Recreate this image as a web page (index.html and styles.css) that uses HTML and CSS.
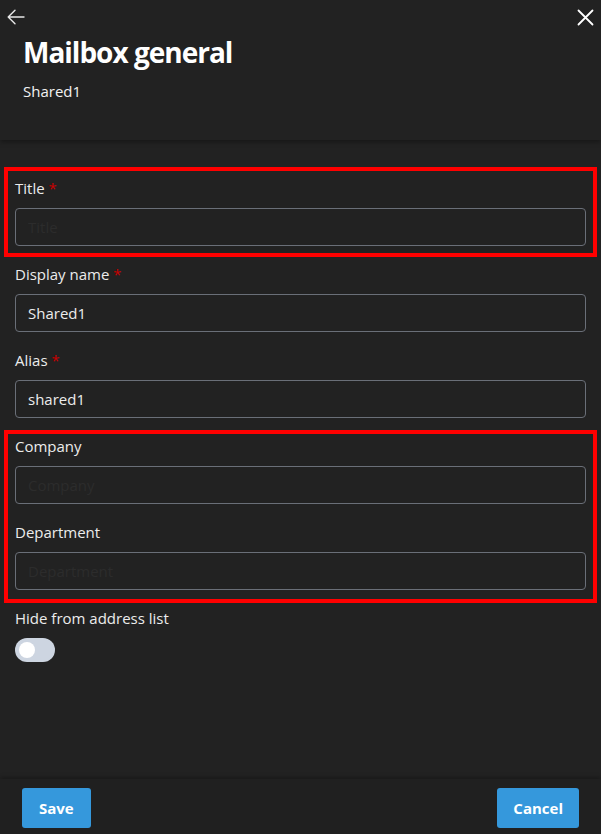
FILE: index.html
```html
<!DOCTYPE html>
<html lang="en">
<head>
<meta charset="utf-8">
<title>Mailbox general</title>
<link rel="stylesheet" href="styles.css">
</head>
<body>
<div class="panel">
  <header class="head">
    <div class="topbar">
      <button class="icon-btn" aria-label="Back">
        <svg width="18" height="16" viewBox="0 0 18 16" fill="none" stroke="#e6e6e6" stroke-width="1.4" stroke-linecap="round" stroke-linejoin="round"><path d="M17 8H1.5M8 1.2L1.2 8L8 14.8"/></svg>
      </button>
      <button class="icon-btn" aria-label="Close">
        <svg width="17" height="17" viewBox="0 0 17 17" fill="none" stroke="#ffffff" stroke-width="1.8" stroke-linecap="round"><path d="M1.5 1.5L15.5 15.5M15.5 1.5L1.5 15.5"/></svg>
      </button>
    </div>
    <h1 class="title">Mailbox general</h1>
    <p class="subtitle">Shared1</p>
  </header>

  <main class="form">
    <div class="group group-one">
      <div class="field">
        <label class="label">Title <span class="req">*</span></label>
        <input class="input" type="text" placeholder="Title">
      </div>
    </div>

    <div class="field">
      <label class="label">Display name <span class="req">*</span></label>
      <input class="input" type="text" value="Shared1">
    </div>

    <div class="field">
      <label class="label">Alias <span class="req">*</span></label>
      <input class="input" type="text" value="shared1">
    </div>

    <div class="group group-two">
      <div class="field">
        <label class="label">Company</label>
        <input class="input" type="text" placeholder="Company">
      </div>
      <div class="field">
        <label class="label">Department</label>
        <input class="input" type="text" placeholder="Department">
      </div>
    </div>

    <div class="field">
      <label class="label">Hide from address list</label>
      <span class="toggle"><span class="knob"></span></span>
    </div>
  </main>

  <footer class="foot">
    <button class="btn">Save</button>
    <button class="btn btn-cancel">Cancel</button>
  </footer>
</div>
</body>
</html>
```

FILE: styles.css
```css
* { box-sizing: border-box; }

html, body {
  margin: 0;
  padding: 0;
  background: #222222;
}

body {
  font-family: "Open Sans", "Noto Sans", "Liberation Sans", sans-serif;
  color: #ececec;
}

.panel {
  width: 601px;
  height: 834px;
  display: flex;
  flex-direction: column;
  background: #222222;
  overflow: hidden;
}

.head {
  position: relative;
  z-index: 2;
  padding: 0 23px 39px;
  background: #222222;
  box-shadow: 0 2px 5px rgba(0, 0, 0, 0.35);
}

.topbar {
  height: 34px;
  margin: 0 -16px;
  padding-top: 9px;
  display: flex;
  justify-content: space-between;
  align-items: flex-start;
}

.icon-btn {
  background: none;
  border: 0;
  padding: 0;
  margin: 0;
  display: block;
  line-height: 0;
}

.title {
  margin: 0;
  font-size: 28px;
  line-height: 36px;
  font-weight: 700;
  color: #ffffff;
  letter-spacing: -1px;
}

.subtitle {
  margin: 11px 0 0;
  font-size: 15px;
  line-height: 20px;
  color: #f2f2f2;
}

.form {
  flex: 1;
  padding: 0 15px;
  display: flex;
  flex-direction: column;
}

.group {
  border: 4px solid #ff0000;
  margin-left: -11px;
  margin-right: -11px;
  padding-left: 7px;
  padding-right: 7px;
}

.group-one {
  margin-top: 27px;
  margin-bottom: 7px;
  padding-top: 7px;
  padding-bottom: 7px;
}

.group-two {
  margin-top: 12px;
  margin-bottom: 5px;
  padding-top: 2px;
  padding-bottom: 9px;
}

.field {
  display: flex;
  flex-direction: column;
  align-items: flex-start;
}

.field + .field {
  margin-top: 18px;
}

.label {
  font-size: 15px;
  line-height: 20px;
  margin-bottom: 10px;
  color: #ececec;
}

.req {
  color: #c80000;
}

.input {
  width: 100%;
  height: 38px;
  border: 1px solid #6a6f78;
  border-radius: 4px;
  background: #222222;
  color: #ececec;
  font-family: inherit;
  font-size: 15px;
  padding: 0 12px;
  outline: none;
}

.input::placeholder {
  color: #2c2c2c;
}

.toggle {
  width: 40px;
  height: 24px;
  border-radius: 12px;
  background: #cdd5e1;
  display: flex;
  align-items: center;
  padding-left: 4px;
}

.knob {
  width: 16px;
  height: 16px;
  border-radius: 50%;
  background: #ffffff;
}

.foot {
  position: relative;
  z-index: 2;
  height: 55px;
  padding: 9px 22px 6px 22px;
  display: flex;
  justify-content: space-between;
  align-items: flex-start;
  background: #202020;
  box-shadow: 0 -2px 4px rgba(0, 0, 0, 0.25);
}

.btn {
  height: 40px;
  padding: 0 17px;
  border: 0;
  border-radius: 3px;
  background: #3598dc;
  color: #ffffff;
  font-family: inherit;
  font-size: 15px;
  font-weight: 700;
}

.btn-cancel {
  padding: 0 16px;
}
```
